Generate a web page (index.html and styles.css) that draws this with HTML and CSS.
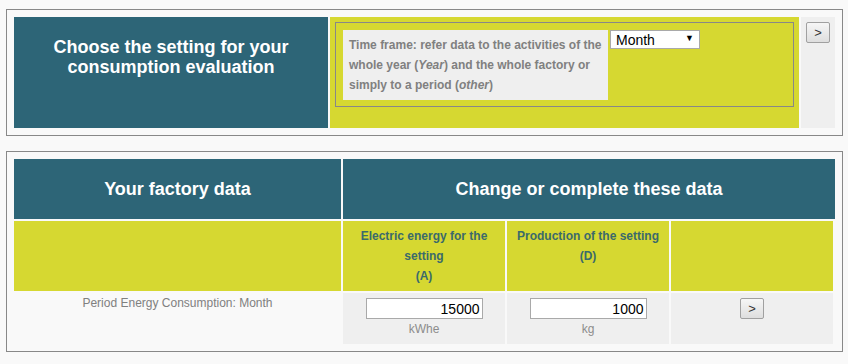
FILE: index.html
```html
<!DOCTYPE html>
<html lang="en">
<head>
    <meta charset="UTF-8">
    <title>Consumption evaluation</title>
    <link rel="stylesheet" href="styles.css">
</head>
<body>

<div class="box box-setting">
    <table class="grid">
        <colgroup>
            <col class="c-setting-title">
            <col>
            <col class="c-go">
        </colgroup>
        <tr>
            <td class="title-cell setting-title">Choose the setting for your consumption evaluation</td>
            <td class="yellow-cell setting-cell">
                <div class="frame">
                    <div class="hint">Time frame: refer data to the activities of the whole year (<em>Year</em>) and the whole factory or simply to a period (<em>other</em>)</div>
                    <span class="select-wrap">
                        <select class="select">
                            <option>Year</option>
                            <option selected>Month</option>
                            <option>other</option>
                        </select>
                    </span>
                </div>
            </td>
            <td class="gray-cell go-cell"><button class="go">&gt;</button></td>
        </tr>
    </table>
</div>

<div class="box box-data">
    <table class="grid">
        <colgroup>
            <col class="c-factory">
            <col class="c-value">
            <col class="c-value">
            <col class="c-value">
            <col>
        </colgroup>
        <tr>
            <td class="title-cell head-cell">Your factory data</td>
            <td class="title-cell head-cell" colspan="4">Change or complete these data</td>
        </tr>
        <tr>
            <td class="yellow-cell label-cell"></td>
            <td class="yellow-cell label-cell">Electric energy for the setting<br>(A)</td>
            <td class="yellow-cell label-cell">Production of the setting<br>(D)</td>
            <td class="yellow-cell label-cell"></td>
            <td></td>
        </tr>
        <tr>
            <td class="period">Period Energy Consumption: Month</td>
            <td class="gray-cell value-cell">
                <input class="num" type="text" value="15000">
                <div class="unit">kWhe</div>
            </td>
            <td class="gray-cell value-cell">
                <input class="num" type="text" value="1000">
                <div class="unit">kg</div>
            </td>
            <td class="gray-cell value-cell"><button class="go">&gt;</button></td>
            <td></td>
        </tr>
    </table>
</div>

</body>
</html>
```

FILE: styles.css
```css
/* Mise en page générale */
body {
    font-family: "Liberation Sans", Arial, sans-serif;
    background-color: #f9f9f9;
    margin: 0;
    padding-top: 9px;
}

.box {
    border: 1px solid #888888;
    margin: 0 5px 0 6px;
    padding: 5px;
}

.box-data {
    margin-top: 15px;
}

.grid {
    border-spacing: 2px;
    width: 100%;
    table-layout: fixed;
}

.grid td {
    padding: 0;
    vertical-align: top;
}

.c-setting-title {
    width: 314px;
}

.c-go {
    width: 34px;
}

.c-factory {
    width: 327px;
}

.c-value {
    width: 162px;
}

.title-cell {
    background-color: #2d6577;
    color: #ffffff;
    font-size: 18px;
    font-weight: bold;
    line-height: 20px;
    text-align: center;
}

.yellow-cell {
    background-color: #d6d831;
}

.gray-cell {
    background-color: #efefef;
}

/* Bloc du haut */
.grid .setting-title {
    height: 111px;
    padding-top: 20px;
    box-sizing: border-box;
}

.grid .setting-cell {
    padding: 5px;
}

.frame {
    border: 1px solid #888888;
    padding: 7px;
    box-sizing: border-box;
    height: 85px;
    display: flex;
    align-items: flex-start;
    gap: 2px;
}

.hint {
    background-color: #efefef;
    color: #808080;
    font-size: 12px;
    font-weight: bold;
    line-height: 20px;
    width: 265px;
    flex-shrink: 0;
    padding: 5px 2px 5px 6px;
    box-sizing: border-box;
}

.select-wrap {
    position: relative;
    display: inline-block;
}

.select {
    appearance: none;
    -webkit-appearance: none;
    width: 90px;
    height: 19px;
    border: 1px solid #a9a9a9;
    background-color: #ffffff;
    font-family: "Liberation Sans", Arial, sans-serif;
    font-size: 14px;
    color: #000000;
    padding: 0 0 0 5px;
    margin: 0;
    border-radius: 0;
    display: block;
}

.select-wrap::after {
    content: "▼";
    position: absolute;
    right: 6px;
    top: 3px;
    font-size: 9px;
    color: #000000;
    pointer-events: none;
}

.grid .go-cell {
    padding: 5px;
}

.go {
    width: 24px;
    height: 21px;
    padding: 0;
    border: 1px solid #a0a0a0;
    border-radius: 2px;
    background: linear-gradient(#f6f6f6, #dedede);
    color: #333333;
    font-family: "Liberation Sans", Arial, sans-serif;
    font-size: 13px;
    line-height: 18px;
    display: block;
    margin: 0 auto;
}

.go-cell .go {
    margin: 0;
}

/* Bloc du bas */
.grid .head-cell {
    height: 60px;
    vertical-align: middle;
}

.grid .label-cell {
    height: 70px;
    box-sizing: border-box;
    padding: 5px 3px;
    color: #3b6a6b;
    font-size: 12px;
    font-weight: bold;
    line-height: 20px;
    text-align: center;
}

.period {
    color: #808080;
    font-size: 12px;
    line-height: 20px;
    text-align: center;
}

.grid .value-cell {
    padding: 5px 0;
    text-align: center;
}

.num {
    display: block;
    margin: 0 auto;
    width: 117px;
    height: 21px;
    box-sizing: border-box;
    border: 1px solid #a9a9a9;
    padding: 0 2px;
    text-align: right;
    font-family: "Liberation Sans", Arial, sans-serif;
    font-size: 14px;
    color: #000000;
    background-color: #ffffff;
}

.unit {
    color: #8c8c8c;
    font-size: 12px;
    line-height: 20px;
}
```
